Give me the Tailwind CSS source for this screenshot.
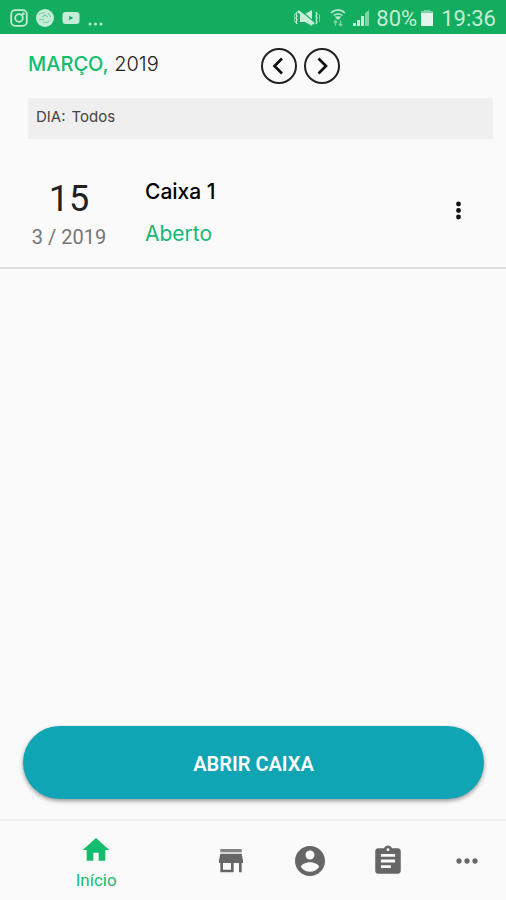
<!DOCTYPE html>
<html lang="pt-BR">
<head>
  <meta charset="UTF-8" />
  <meta name="viewport" content="width=device-width, initial-scale=1.0" />
  <title>Caixa</title>
  <script src="https://cdn.jsdelivr.net/npm/@tailwindcss/browser@4"></script>
</head>
<body class="bg-[#fafafa] text-[#212121] font-['Roboto',sans-serif] flex flex-col min-h-screen">

  <!-- Status bar -->
  <div class="h-[34px] bg-[#12ad5f] text-[#c5ecd7] flex items-center justify-between px-2.5">
    <div class="flex items-center gap-2 pt-0.5">
      <svg class="w-[18px] h-[18px]" viewBox="0 0 18 18" fill="none" stroke="currentColor" stroke-width="1.8">
        <rect x="1.2" y="1.2" width="15.6" height="15.6" rx="4" />
        <circle cx="9" cy="9" r="3.8" />
        <circle cx="13.3" cy="4.7" r="0.6" />
      </svg>
      <svg class="w-[18px] h-[18px]" viewBox="0 0 18 18">
        <circle cx="9" cy="9" r="9" fill="currentColor" />
        <path d="M3 6c2-3 4-1 6-3M6 8l3-2 3 2M3 11c2-2 3 1 5-1M7 14c2-2 3 1 6-2M12 4l3 4" fill="none" stroke="#5fc893" stroke-width="1" />
      </svg>
      <svg class="w-[18px] h-[18px]" viewBox="0 0 18 18">
        <rect x="0.5" y="3" width="17" height="12" rx="3" fill="currentColor" />
        <path d="M7.2 6.8v4.4L11.2 9z" fill="#12ad5f" />
      </svg>
      <svg class="w-4 h-[18px]" viewBox="0 0 16 18" fill="currentColor">
        <circle cx="2" cy="15" r="1.5" />
        <circle cx="7.5" cy="15" r="1.5" />
        <circle cx="13" cy="15" r="1.5" />
      </svg>
    </div>
    <div class="flex items-center text-[22px] pt-0.5">
      <svg class="w-[26px] h-[18px] mr-2.5" viewBox="0 0 26 18">
        <path d="M6 5h5l7-4v16l-7-4H6z" fill="currentColor" />
        <path d="M6 1l14 12" stroke="#12ad5f" stroke-width="1.6" />
        <path d="M4 2l16 13" stroke="currentColor" stroke-width="2.4" />
        <path d="M3 3L2 5l1 2-1 2 1 2-1 2 1 2M22 3l1 2-1 2 1 2-1 2 1 2-1 2" fill="none" stroke="currentColor" stroke-width="1.4" />
        <path d="M.5 5v8M25.500 5v8" stroke="#7fd3a8" />
      </svg>
      <svg class="w-4 h-[18px] mr-1.5" viewBox="0 0 16 18" fill="none" stroke="currentColor" stroke-width="1.4">
        <path d="M1 4c4-4 10-4 14 0M3.5 6.5c3-2 6-2 9 0" />
        <path d="M4.5 7.5h7L8 11z" fill="currentColor" stroke="none" />
        <path d="M5.500 17v-5M3.800 13.500l1.700-1.700 1.700 1.700M10.500 11.500v5M8.800 15l1.700 1.700 1.700-1.700" stroke="#7fd3a8" />
      </svg>
      <svg class="w-[18px] h-[18px] mr-1.5" viewBox="0 0 18 18" fill="currentColor">
        <path d="M1 14h3v3H1zM5 11h3v6H5zM9 7h3v10H9z" />
        <path d="M13 4l4-3v16h-4z" fill="#7fd3a8" />
      </svg>
      <span class="mr-1">80%</span>
      <svg class="w-3 h-[18px] mr-2" viewBox="0 0 12 18">
        <path d="M3 1h6v1h3v3H0V2h3z" fill="#7fd3a8" />
        <path d="M0 4h12v13H0z" fill="#e3f6eb" />
      </svg>
      <span>19:36</span>
    </div>
  </div>

  <!-- Month picker -->
  <header class="h-16 flex items-center pl-7">
    <h1 class="w-[233px] text-xl font-['Inter',sans-serif] pb-1"><span class="text-[#14bd6e] font-medium">MARÇO,</span> <span class="font-light">2019</span></h1>
    <div class="flex gap-[7px]">
      <button aria-label="Mês anterior" class="w-9 h-9 rounded-full border-2 border-[#222] flex items-center justify-center">
        <svg class="w-5 h-5" viewBox="0 0 20 20" fill="none" stroke="#111" stroke-width="2.7"><path d="M13 2.500L5.500 10l7.500 7.500" /></svg>
      </button>
      <button aria-label="Próximo mês" class="w-9 h-9 rounded-full border-2 border-[#222] flex items-center justify-center">
        <svg class="w-5 h-5" viewBox="0 0 20 20" fill="none" stroke="#111" stroke-width="2.7"><path d="M6.500 2.500L14 10l-7.500 7.500" /></svg>
      </button>
    </div>
  </header>

  <div class="ml-7 mr-[13px] h-[41px] bg-[#efefef] flex items-center gap-1.5 px-2 pb-0.5 text-[15px] text-[#444] font-['Inter',sans-serif]">
    <label for="dia">DIA:</label>
    <select id="dia" class="appearance-none flex-1 bg-transparent">
      <option>Todos</option>
    </select>
  </div>

  <!-- Cash registers -->
  <main class="flex-1">
    <div class="mt-4 h-[114px] flex items-center border-b-2 border-[#dcdcdc]">
      <div class="w-[138px] text-center pt-3">
        <p class="text-4xl">15</p>
        <p class="text-xl leading-9 text-[#757575]">3 / 2019</p>
      </div>
      <div class="flex-1 pl-[7px] pt-1 text-[21px] font-['Inter',sans-serif] flex flex-col gap-3.5">
        <p class="text-black font-medium leading-7">Caixa 1</p>
        <p class="text-[#16b777] leading-7">Aberto</p>
      </div>
      <button aria-label="Opções" class="w-6 h-6 mr-9">
        <svg class="w-6 h-6" viewBox="0 0 24 24" fill="#111">
          <circle cx="12.5" cy="5" r="2.4" />
          <circle cx="12.5" cy="11.5" r="2.4" />
          <circle cx="12.5" cy="18" r="2.4" />
        </svg>
      </button>
    </div>
  </main>

  <div class="pl-[23px] pr-[22px] pb-5">
    <button class="w-full h-[73px] rounded-full bg-[#10a5b5] text-white text-xl font-semibold pt-0.5 shadow-[0_2px_4px_rgba(0,0,0,0.4)]">ABRIR CAIXA</button>
  </div>

  <!-- Bottom navigation -->
  <nav class="h-[81px] border-t-2 border-[#f0f0f0] flex items-center text-[#666]">
    <a href="#" class="w-[38%] flex flex-col items-center pt-1.5 text-[#14bd6e]">
      <svg class="w-8 h-8" viewBox="0 0 24 24" fill="currentColor"><path d="M10 20v-6h4v6h5v-8h3L12 3 2 12h3v8z" /></svg>
      <span class="text-[17px] leading-7">Início</span>
    </a>
    <a href="#" aria-label="Loja" class="flex-1 flex justify-center">
      <svg class="w-8 h-8" viewBox="0 0 24 24" fill="currentColor">
        <path d="M20 3H4v2.500h16V3z" opacity="0.8" />
        <path d="M4 6.500h16l1 5v2h-1v7h-2v-7h-4v7H4v-7H3v-2zM6 13.500v5h6v-5z" fill-rule="evenodd" />
      </svg>
    </a>
    <a href="#" aria-label="Perfil" class="flex-1 flex justify-center">
      <svg class="w-9 h-9" viewBox="0 0 24 24" fill="currentColor"><path d="M12 2C6.480 2 2 6.480 2 12s4.480 10 10 10 10-4.480 10-10S17.520 2 12 2zm0 3c1.660 0 3 1.340 3 3s-1.340 3-3 3-3-1.340-3-3 1.340-3 3-3zm0 14.200c-2.500 0-4.710-1.280-6-3.220.03-1.990 4-3.080 6-3.080 1.990 0 5.970 1.090 6 3.080-1.290 1.940-3.500 3.220-6 3.220z" /></svg>
    </a>
    <a href="#" aria-label="Relatórios" class="flex-1 flex justify-center">
      <svg class="w-[34px] h-[34px]" viewBox="0 0 24 24" fill="currentColor"><path d="M19 3h-4.180C14.400 1.840 13.300 1 12 1c-1.300 0-2.400.84-2.820 2H5c-1.100 0-2 .9-2 2v14c0 1.100.9 2 2 2h14c1.100 0 2-.9 2-2V5c0-1.100-.9-2-2-2zm-7 0c.55 0 1 .45 1 1s-.45 1-1 1-1-.45-1-1 .45-1 1-1zm2 14H7v-2h7v2zm3-4H7v-2h10v2zm0-4H7V7h10v2z" /></svg>
    </a>
    <a href="#" aria-label="Mais" class="flex-1 flex justify-center">
      <svg class="w-8 h-8" viewBox="0 0 24 24" fill="currentColor"><path d="M6 10c-1.100 0-2 .9-2 2s.9 2 2 2 2-.9 2-2-.9-2-2-2zm12 0c-1.100 0-2 .9-2 2s.9 2 2 2 2-.9 2-2-.9-2-2-2zm-6 0c-1.100 0-2 .9-2 2s.9 2 2 2 2-.9 2-2-.9-2-2-2z" /></svg>
    </a>
  </nav>

</body>
</html>
